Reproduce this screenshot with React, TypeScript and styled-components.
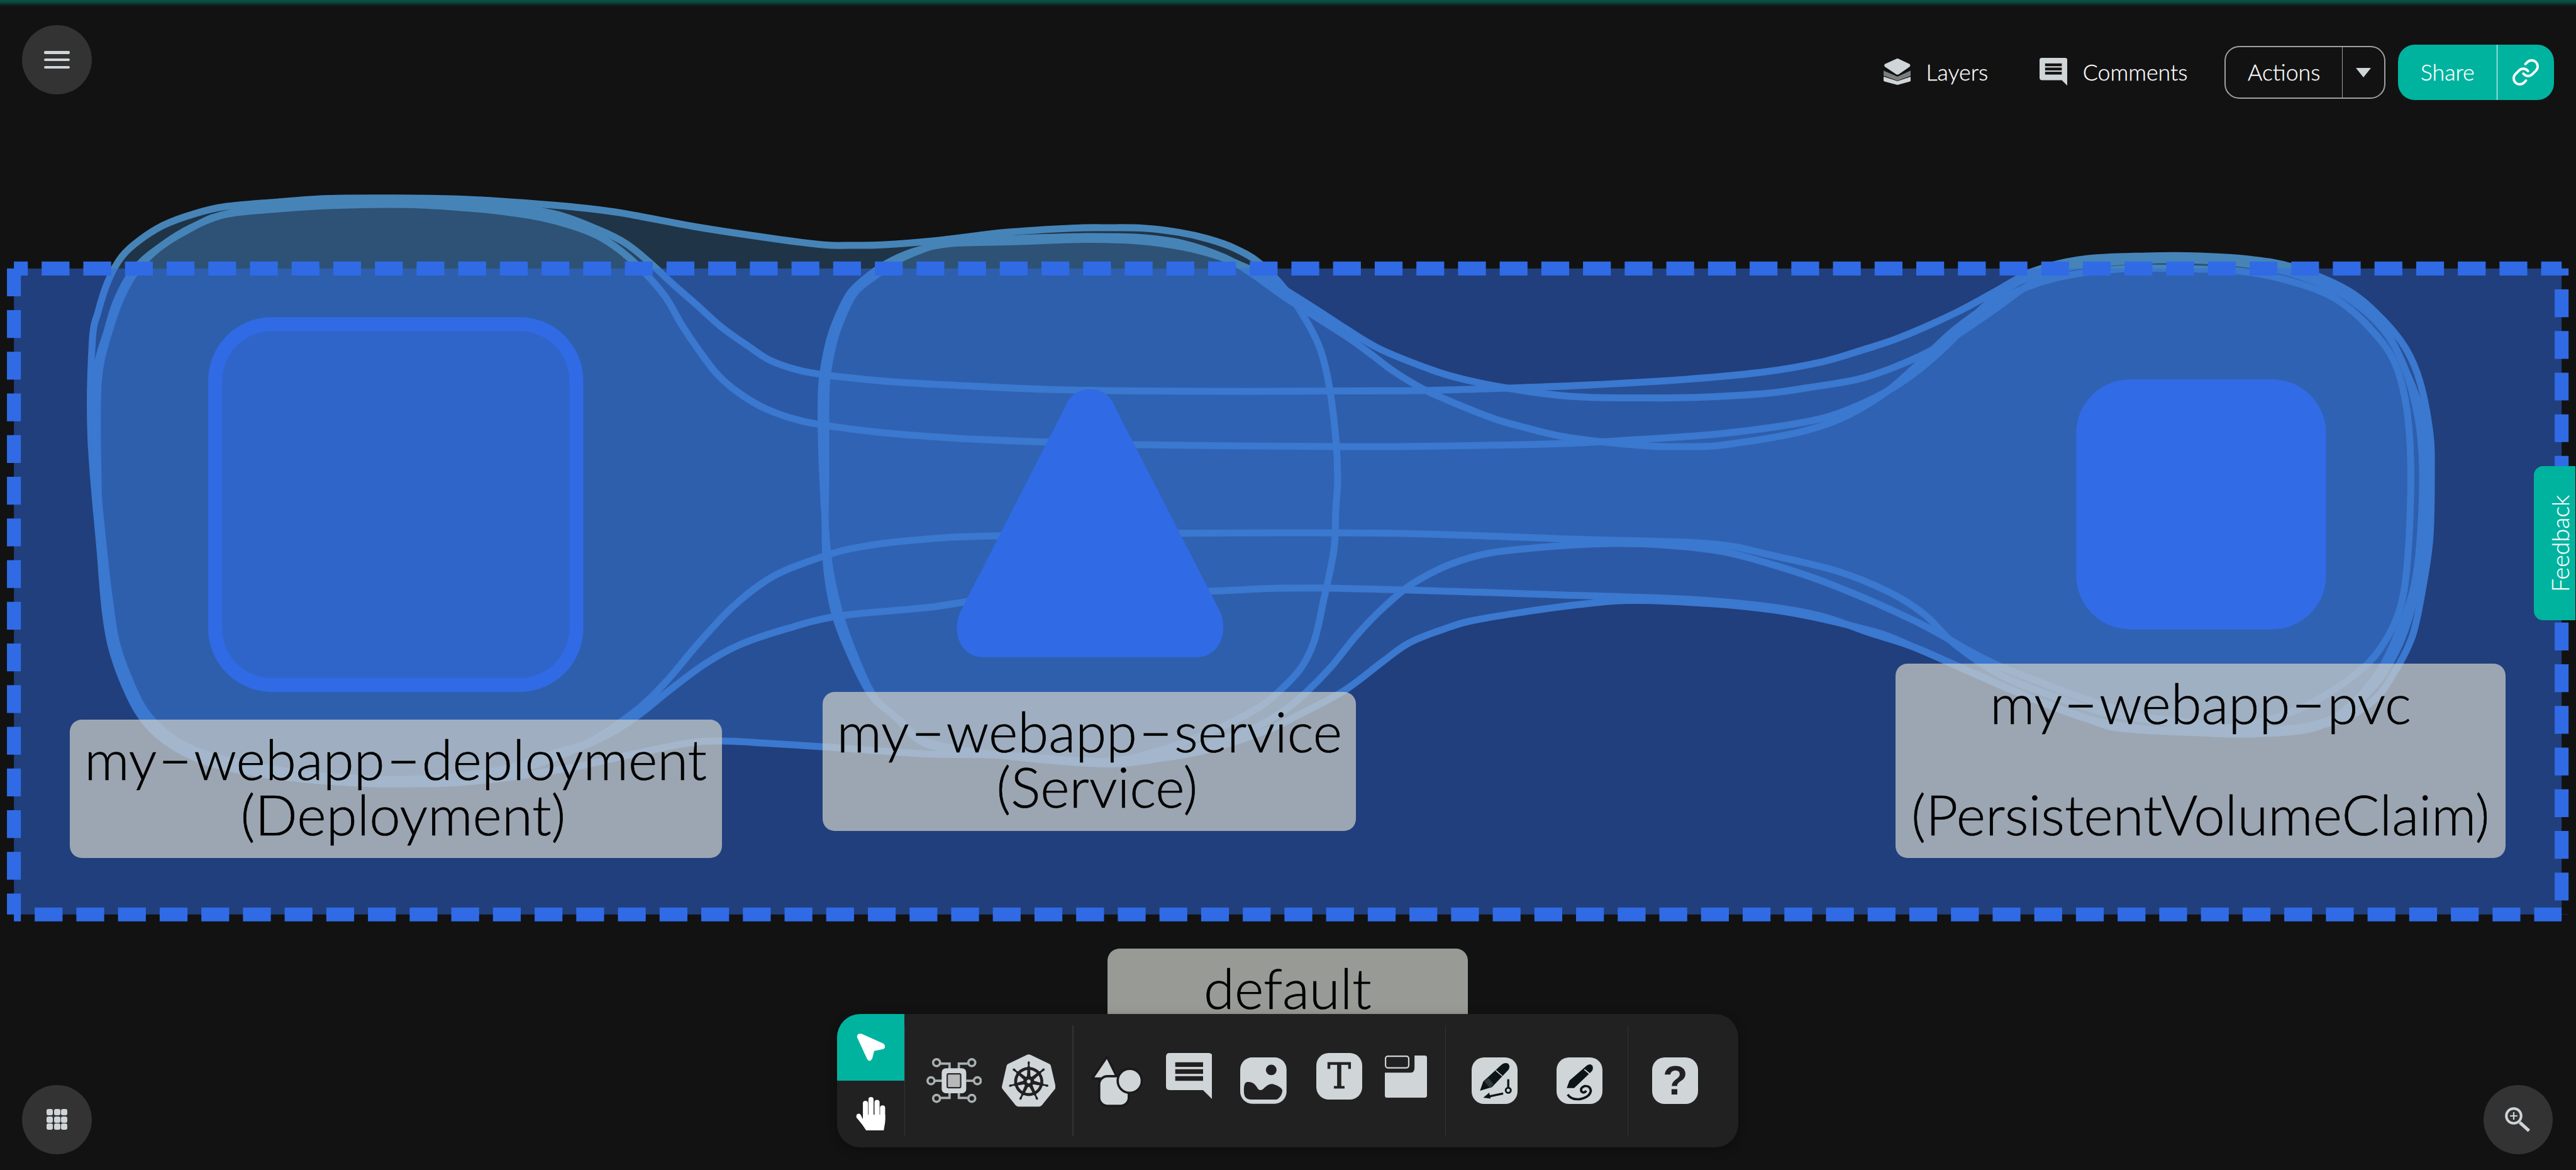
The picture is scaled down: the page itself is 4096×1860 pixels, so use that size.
import styled, { createGlobalStyle } from 'styled-components';
import { Link } from 'lucide-react';
import { SiKubernetes } from 'react-icons/si';

// everything is measured on the 5556 wide reference
const u = (n: number) => `${n * 0.737}px`;

const ICON = '#d0d5d8';
const TEAL = '#00b39f';
const BAR = '#212121';

const GlobalStyle = createGlobalStyle`
  html, body {
    background: #121212;
    margin: 0;
    overflow: hidden;
  }
  * { box-sizing: border-box; }
`;

const Page = styled.div`
  background: #121212;
  color: #fff;
  font-family: Lato, 'Open Sans', sans-serif;
  font-weight: 300;
  height: 1860px;
  overflow: hidden;
  position: relative;
  width: 4096px;
  -webkit-text-stroke: 0.3px #fff;
`;

const TopGlow = styled.div`
  background: linear-gradient(180deg, #0a5347 0%, #0a4a40 30%, #121212 100%);
  height: ${u(13)};
  left: 0;
  position: absolute;
  right: 0;
  top: 0;
`;

const Canvas = styled.svg`
  height: 1860px;
  left: 0;
  position: absolute;
  top: 0;
  width: 4096px;
`;

const NodeLabel = styled.div<{ $x: number; $y: number; $w: number }>`
  background: rgba(204, 207, 201, 0.72);
  border-radius: ${u(26)};
  color: #000;
  font-size: ${u(120.5)};
  left: ${(p) => u(p.$x)};
  line-height: ${u(120)};
  padding: ${u(24)} 0 ${u(35)};
  position: absolute;
  text-align: center;
  top: ${(p) => u(p.$y)};
  white-space: nowrap;
  width: ${(p) => u(p.$w)};
  -webkit-text-stroke: 0.7px #000;
`;

// the hyphens of the node names are much wider and heavier than a plain one
const Dash = styled.span`
  display: inline-block;
  font-size: ${u(48)};
  line-height: 1;
  text-align: center;
  transform: translateY(${u(-24)}) scaleX(3.4);
  width: ${u(80)};
  -webkit-text-stroke: 3px #000;
`;

const RoundButton = styled.button<{ $x: number; $y: number }>`
  align-items: center;
  background: #333;
  border: 0;
  border-radius: 50%;
  display: flex;
  height: ${u(150)};
  justify-content: center;
  left: ${(p) => u(p.$x)};
  padding: 0;
  position: absolute;
  top: ${(p) => u(p.$y)};
  width: ${u(150)};
`;

const Burger = styled.span`
  display: flex;
  flex-direction: column;
  gap: ${u(10)};
  width: ${u(56)};

  i {
    background: ${ICON};
    border-radius: 2px;
    display: block;
    height: ${u(6)};
  }
`;

const DotGrid = styled.span`
  display: grid;
  gap: ${u(2)};
  grid-template-columns: repeat(3, ${u(13.5)});

  i {
    background: ${ICON};
    border-radius: ${u(4)};
    display: block;
    height: ${u(13.5)};
  }
`;

const TopBar = styled.div`
  align-items: center;
  display: flex;
  height: ${u(120)};
  position: absolute;
  right: ${u(48)};
  top: ${u(96)};
`;

const BarLink = styled.div<{ $gap: number }>`
  align-items: center;
  display: flex;
  font-size: ${u(48.5)};
  gap: ${u(33)};
  margin-right: ${(p) => u(p.$gap)};
  padding-bottom: ${u(2)};
`;

const ActionsButton = styled.div`
  align-items: stretch;
  border: ${u(3)} solid #a0a0a0;
  border-radius: ${u(32)};
  display: flex;
  font-size: ${u(48.5)};
  height: ${u(114)};
  margin-right: ${u(27)};
  width: ${u(347)};
`;

const ActionsLabel = styled.span`
  align-items: center;
  border-right: ${u(2)} solid #a0a0a0;
  display: flex;
  justify-content: center;
  padding-bottom: ${u(2)};
  width: ${u(252)};
`;

const Caret = styled.span`
  align-items: center;
  display: flex;
  flex: 1;
  justify-content: center;
  padding-top: ${u(2)};

  &::before {
    border-left: ${u(17)} solid transparent;
    border-right: ${u(17)} solid transparent;
    border-top: ${u(21)} solid ${ICON};
    content: '';
    display: block;
  }
`;

const ShareButton = styled.div`
  background: ${TEAL};
  border-radius: ${u(36)};
  display: flex;
  font-size: ${u(48.5)};
  height: ${u(120)};
  width: ${u(336)};
`;

const ShareLabel = styled.span`
  align-items: center;
  border-right: ${u(2)} solid #fff;
  display: flex;
  justify-content: center;
  padding-bottom: ${u(2)};
  width: ${u(215)};
`;

const ShareLink = styled.span`
  align-items: center;
  display: flex;
  flex: 1;
  justify-content: center;
`;

const FeedbackTab = styled.div`
  align-items: center;
  background: ${TEAL};
  border-radius: ${u(20)} 0 0 ${u(20)};
  display: flex;
  font-size: ${u(51)};
  height: ${u(332)};
  justify-content: center;
  left: ${u(5467)};
  padding-left: ${u(24)};
  position: absolute;
  top: ${u(1006)};
  width: ${u(89)};

  span {
    transform: rotate(180deg);
    writing-mode: vertical-rl;
  }
`;

const Toolbar = styled.div`
  background: ${BAR};
  border-radius: ${u(50)};
  box-shadow: 0 ${u(6)} ${u(20)} rgba(0, 0, 0, 0.25);
  display: flex;
  height: ${u(288)};
  left: ${u(1806)};
  overflow: hidden;
  position: absolute;
  top: ${u(2187)};
  width: ${u(1944)};
`;

const ModeColumn = styled.div`
  display: flex;
  flex: none;
  flex-direction: column;
  width: ${u(145)};
`;

const ModeCell = styled.div<{ $active?: boolean }>`
  align-items: center;
  background: ${(p) => (p.$active ? TEAL : 'transparent')};
  display: flex;
  height: ${u(144)};
  justify-content: center;
`;

const ToolGroup = styled.div<{ $w: number; $pad: number }>`
  align-items: center;
  display: flex;
  flex: none;
  padding-left: ${(p) => u(p.$pad)};
  position: relative;
  width: ${(p) => u(p.$w)};

  &::before {
    background: #333;
    bottom: ${u(24)};
    content: '';
    left: 0;
    position: absolute;
    top: ${u(24)};
    width: ${u(2)};
  }
`;

const Tool = styled.div<{ $gap?: number; $lift?: number }>`
  display: flex;
  flex: none;
  margin-left: ${(p) => u(p.$gap ?? 0)};
  margin-top: ${(p) => u(-2 * (p.$lift ?? 0))};
`;

const Tile = styled.div`
  align-items: center;
  background: ${ICON};
  border-radius: ${u(27)};
  color: #222;
  display: flex;
  flex: none;
  height: ${u(100)};
  justify-content: center;
  overflow: hidden;
  width: ${u(99)};
  -webkit-text-stroke: 0;
`;

const TileSerif = styled.span`
  font-family: 'DejaVu Serif', serif;
  font-size: ${u(76)};
  font-weight: 400;
  line-height: 1;
  -webkit-text-stroke: 1px #222;
`;

const TileMark = styled.span`
  font-family: 'Liberation Sans', sans-serif;
  font-size: ${u(88)};
  font-weight: 700;
  line-height: 1;
`;

// smooth closed outline through the measured points
function outline(pts: number[][]) {
  const n = pts.length;
  let d = `M${pts[0][0]} ${pts[0][1]}`;
  for (let i = 0; i < n; i++) {
    const p0 = pts[(i - 1 + n) % n];
    const p1 = pts[i];
    const p2 = pts[(i + 1) % n];
    const p3 = pts[(i + 2) % n];
    const c1x = p1[0] + (p2[0] - p0[0]) / 6;
    const c1y = p1[1] + (p2[1] - p0[1]) / 6;
    const c2x = p2[0] - (p3[0] - p1[0]) / 6;
    const c2y = p2[1] - (p3[1] - p1[1]) / 6;
    d += ` C${c1x.toFixed(1)} ${c1y.toFixed(1)} ${c2x.toFixed(1)} ${c2y.toFixed(1)} ${p2[0]} ${p2[1]}`;
  }
  return d + 'Z';
}

const bubbles: number[][][] = [
  // deployment + service
  [[196,941],[199,737],[212,671],[234,604],[263,553],[301,518],[354,485],[416,462],[483,446],[593,436],[708,428],[851,427],[985,429],[1081,434],[1234,446],[1339,459],[1500,489],[1672,515],[1777,528],[1835,529],[1902,528],[2026,518],[2170,501],[2313,492],[2390,491],[2466,492],[2543,501],[2605,515],[2662,535],[2715,566],[2772,624],[2820,696],[2849,757],[2868,839],[2882,956],[2885,1038],[2881,1100],[2877,1186],[2856,1289],[2835,1381],[2807,1439],[2765,1485],[2716,1525],[2617,1576],[2505,1617],[2379,1642],[2154,1628],[2000,1626],[1786,1611],[1658,1603],[1556,1598],[1480,1603],[1352,1629],[1212,1659],[1020,1685],[880,1690],[714,1685],[536,1664],[434,1639],[357,1598],[306,1547],[274,1486],[242,1394],[227,1302],[217,1200]],
  // deployment + pvc, upper
  [[206,890],[210,788],[230,717],[249,655],[277,599],[311,559],[359,523],[407,495],[459,469],[530,452],[600,440],[708,432],[851,430],[985,434],[1091,445],[1200,462],[1290,495],[1350,525],[1400,565],[1454,615],[1500,655],[1557,706],[1615,747],[1663,778],[1730,800],[1816,813],[1921,823],[2064,831],[2265,840],[2457,843],[2696,844],[2900,843],[3075,842],[3251,837],[3433,830],[3637,818],[3805,802],[3931,780],[4016,755],[4100,727],[4217,675],[4301,630],[4385,585],[4491,559],[4629,552],[4745,552],[4850,559],[4945,576],[5062,625],[5135,685],[5188,750],[5220,825],[5241,934],[5244,1011],[5241,1159],[5225,1271],[5204,1369],[5170,1440],[5120,1510],[5040,1555],[4930,1572],[4820,1570],[4740,1565],[4555,1540],[4425,1500],[4314,1455],[4217,1390],[4153,1327],[4077,1278],[3964,1232],[3824,1198],[3684,1172],[3403,1163],[3000,1150],[2543,1150],[2122,1156],[1969,1165],[1864,1178],[1787,1196],[1671,1241],[1582,1307],[1505,1389],[1441,1465],[1378,1527],[1276,1598],[1199,1623],[1080,1660],[900,1680],[714,1675],[540,1650],[440,1625],[370,1590],[318,1540],[285,1480],[252,1390],[237,1300],[225,1200],[206,1000]],
  // deployment + pvc, lower
  [[210,900],[216,790],[240,700],[262,640],[290,590],[325,550],[370,515],[420,487],[488,462],[593,451],[698,444],[804,441],[909,442],[1014,449],[1091,457],[1167,469],[1234,487],[1292,510],[1339,541],[1387,584],[1435,640],[1470,700],[1505,752],[1548,808],[1596,849],[1653,882],[1730,908],[1835,925],[1959,938],[2122,948],[2457,959],[2900,963],[3096,962],[3356,957],[3531,948],[3693,937],[3833,920],[3931,902],[4006,875],[4080,838],[4143,794],[4206,738],[4280,660],[4354,608],[4440,580],[4560,565],[4700,560],[4850,570],[4960,595],[5060,640],[5140,710],[5185,790],[5215,900],[5225,1011],[5220,1160],[5205,1271],[5170,1370],[5130,1450],[5070,1520],[4990,1570],[4850,1583],[4740,1580],[4629,1575],[4555,1568],[4490,1545],[4375,1503],[4259,1453],[4132,1397],[4034,1365],[3900,1322],[3684,1295],[3403,1284],[2842,1268],[2603,1275],[2200,1285],[2000,1310],[1811,1328],[1696,1356],[1594,1391],[1520,1432],[1441,1491],[1380,1540],[1314,1583],[1224,1623],[1122,1659],[1000,1675],[880,1690],[714,1685],[536,1664],[434,1639],[357,1598],[306,1547],[270,1480],[240,1394],[225,1300],[215,1150]],
  // service + pvc, upper
  [[1771,910],[1773,823],[1787,742],[1806,686],[1835,630],[1878,591],[1921,563],[1978,540],[2055,525],[2198,521],[2342,516],[2457,520],[2552,533],[2629,553],[2686,576],[2715,590],[2780,630],[2840,668],[2900,707],[2977,753],[3089,798],[3153,817],[3251,837],[3356,852],[3433,857],[3531,858],[3658,857],[3812,848],[3900,836],[4006,818],[4080,794],[4153,762],[4217,725],[4301,668],[4375,615],[4450,580],[4560,558],[4700,556],[4850,562],[4950,585],[5050,630],[5135,700],[5185,790],[5225,900],[5232,1011],[5228,1160],[5210,1280],[5175,1390],[5120,1480],[5040,1545],[4950,1570],[4830,1575],[4740,1560],[4629,1547],[4555,1527],[4462,1495],[4398,1470],[4314,1437],[4250,1405],[4132,1340],[3964,1266],[3824,1218],[3687,1185],[3487,1172],[3263,1186],[3150,1209],[3052,1255],[2982,1312],[2926,1370],[2870,1439],[2814,1496],[2765,1536],[2702,1571],[2600,1605],[2505,1628],[2379,1642],[2154,1628],[2000,1605],[1939,1552],[1888,1506],[1850,1430],[1811,1322],[1786,1200],[1775,1038]],
  // service + pvc, lower
  [[1781,1030],[1781,910],[1783,823],[1797,742],[1816,686],[1845,630],[1888,595],[1930,565],[1985,540],[2055,520],[2198,514],[2342,510],[2457,512],[2552,525],[2640,555],[2700,590],[2770,640],[2900,723],[2956,763],[3005,800],[3068,838],[3139,870],[3223,903],[3293,923],[3363,940],[3447,952],[3559,962],[3623,963],[3693,962],[3763,953],[3826,943],[3889,930],[3953,910],[4006,885],[4069,845],[4132,790],[4217,710],[4312,646],[4428,601],[4576,580],[4734,580],[4850,587],[4956,611],[5040,646],[5114,710],[5167,787],[5194,906],[5199,1082],[5183,1285],[5135,1397],[5062,1468],[4956,1530],[4840,1565],[4740,1572],[4630,1572],[4502,1550],[4375,1503],[4259,1453],[4132,1397],[4034,1360],[3824,1315],[3557,1295],[3403,1304],[3193,1335],[3110,1358],[3038,1387],[2982,1427],[2898,1490],[2800,1542],[2730,1576],[2603,1617],[2505,1635],[2379,1647],[2154,1628],[2000,1600],[1930,1545],[1880,1500],[1840,1425],[1800,1322],[1781,1200]],
];

const RING = 'M2296 880C2306 850 2330 839 2351 839C2372 839 2396 850 2406 880L2633 1322C2650 1370 2625 1417 2582 1417L2119 1417C2076 1417 2052 1370 2070 1322Z';

function Diagram() {
  const paths = bubbles.map(outline);
  const dash = { stroke: '#306be5', strokeWidth: 30, strokeDasharray: '60 29.85', fill: 'none' };
  return (
    <Canvas viewBox="0 0 5556 2523">
      {paths.map((d, i) => (
        <path key={i} d={d} fill="rgba(51,96,138,0.45)" />
      ))}
      {paths.map((d, i) => (
        <path key={i} d={d} fill="none" stroke="#4684b8" strokeWidth={15} strokeLinejoin="round" />
      ))}
      <rect x={30} y={579} width={5495} height={1393} fill="rgba(48,107,229,0.5)" />
      <line x1={30} y1={579} x2={5525} y2={579} strokeDashoffset={30} {...dash} />
      <line x1={30} y1={579} x2={30} y2={1972} {...dash} />
      <line x1={30} y1={1972} x2={5525} y2={1972} strokeDashoffset={45} {...dash} />
      <line x1={5525} y1={579} x2={5525} y2={1972} strokeDashoffset={45} {...dash} />
      <rect x={464} y={699} width={779} height={778} rx={122} fill="rgba(48,107,229,0.5)" stroke="#306be5" strokeWidth={30} />
      <path d={RING} fill="#306be5" />
      <rect x={4478} y={818} width={539} height={539} rx={116} fill="#316be5" />
    </Canvas>
  );
}

function LayersIcon() {
  return (
    <svg width={u(59)} height={u(57)} viewBox="0 0 59 57">
      <path d="M30 39 L59 26 V37 L30 48 L0 37 V26Z" fill="#7a7d7e" />
      <path d="M0 39 L30 49 L59 39 V47 Q59 49 56 50 L30 57 L3 50 Q0 49 0 47Z" fill={ICON} />
      <path d="M27 1 Q30 -1 33 1 L56 12 Q59 15 56 18 L33 34 Q30 36 27 34 L3 18 Q0 15 3 12Z" fill={ICON} />
    </svg>
  );
}

function CommentIcon({ size, cut }: { size: number; cut: string }) {
  return (
    <svg width={u(size)} height={u(size)} viewBox="0 0 100 100">
      <path d="M8 0H92Q100 0 100 8V100L80 80H8Q0 80 0 72V8Q0 0 8 0Z" fill={ICON} />
      <rect x={20} y={20} width={60} height={10} fill={cut} />
      <rect x={20} y={35} width={60} height={10} fill={cut} />
      <rect x={20} y={50} width={60} height={10} fill={cut} />
    </svg>
  );
}

function CursorIcon() {
  return (
    <svg width={u(62)} height={u(62)} viewBox="0 0 62 62">
      <path d="M11 2L58 23Q65 30 58 35L38 39L34 55Q29 65 23 57L1 9Q1 0 11 2Z" fill="#fff" />
    </svg>
  );
}

function HandIcon() {
  return (
    <svg width={u(64)} height={u(72)} viewBox="0 0 64 72" fill="#fff">
      <rect x={15} y={8} width={11} height={46} rx={5.5} />
      <rect x={27} y={0} width={11} height={50} rx={5.5} />
      <rect x={40} y={6} width={11} height={46} rx={5.5} />
      <rect x={52} y={18} width={11} height={36} rx={5.5} />
      <path d="M15 38H63V54L60 72H22L14 60L1 44Q0 36 6 36Q10 36 12 42L15 48Z" />
    </svg>
  );
}

function ChipIcon() {
  const wire = '#a8b0b0';
  const nodes = [[22, 10], [98, 10], [10, 49], [110, 49], [22, 87], [98, 87]];
  return (
    <svg width={u(120)} height={u(97)} viewBox="0 0 120 97">
      <path d="M31 12H50V24M89 12H70V24M19 49H34M101 49H86M31 86H50V74M89 86H70V74" fill="none" stroke={wire} strokeWidth={5} />
      {nodes.map(([cx, cy]) => (
        <circle key={`${cx}-${cy}`} cx={cx} cy={cy} r={7.5} fill="none" stroke={wire} strokeWidth={5} />
      ))}
      <rect x={33} y={22} width={53} height={54} rx={9} fill={ICON} />
      <rect x={45} y={34} width={29} height={30} rx={3} fill="#b5bab9" stroke="#2a2a2a" strokeWidth={3} />
    </svg>
  );
}

function ShapesIcon() {
  return (
    <svg width={u(115)} height={u(118)} viewBox="0 0 115 118">
      <path d="M37 8L60 55H5Z" fill={ICON} stroke="#1a1a1a" strokeWidth={5} strokeLinejoin="round" />
      <rect x={20} y={50} width={64} height={64} rx={18} fill={ICON} stroke="#1a1a1a" strokeWidth={5} />
      <circle cx={86} cy={60} r={26} fill={ICON} stroke="#1a1a1a" strokeWidth={5} />
    </svg>
  );
}

function ImageIcon() {
  return (
    <svg width={u(100)} height={u(100)} viewBox="0 0 100 100">
      <rect width={100} height={100} rx={26} fill={ICON} />
      <circle cx={67} cy={27} r={11.5} fill={BAR} />
      <path d="M8 73C8 62 9 53 16 53C26 52 32 58 36 64C40 72 45 72 50 68C58 60 64 56 72 58C80 60 91 66 91 72C90 80 86 88 78 91H24C12 91 8 84 8 73Z" fill={BAR} />
    </svg>
  );
}

function ContainerIcon() {
  return (
    <svg width={u(91)} height={u(91)} viewBox="0 0 91 91">
      <path d="M64 0H86Q91 0 91 5V86Q91 91 86 91H5Q0 91 0 86V37H54Q64 37 64 27Z" fill={ICON} />
      <rect x={1.5} y={1.5} width={50} height={25} rx={5} fill="none" stroke={ICON} strokeWidth={3} />
    </svg>
  );
}

function PenArrowIcon() {
  return (
    <svg width={u(99)} height={u(100)} viewBox="0 0 99 100">
      <path d="M18 72L25 52L62 18Q70 10 78 13Q84 18 80 26L44 64Z" fill="#0d1417" />
      <path d="M27 52L36 44L47 58L40 66Z" fill="#2d383c" />
      <path d="M52 28L66 40" stroke={ICON} strokeWidth={2} />
      <path d="M79 47V64M68 78L34 85" stroke="#0d1417" strokeWidth={4.5} />
      <circle cx={79} cy={71} r={5.5} fill="none" stroke="#0d1417" strokeWidth={4} />
      <path d="M25 87L38 76L41 89Z" fill="#0d1417" />
    </svg>
  );
}

function PenSwirlIcon() {
  return (
    <svg width={u(98)} height={u(100)} viewBox="0 0 98 100">
      <path d="M22 66L28 50L66 17Q74 12 78 19Q80 26 75 31L38 66Z" fill="#0d1417" />
      <path d="M60 26L72 36" stroke={ICON} strokeWidth={2.5} />
      <path d="M24 80Q32 92 50 90Q72 86 74 72Q72 60 60 62Q50 66 54 74Q60 78 64 72" fill="none" stroke="#0d1417" strokeWidth={5} />
    </svg>
  );
}

function ZoomIcon() {
  return (
    <svg width={u(56)} height={u(54)} viewBox="0 0 56 54" fill="none" stroke={ICON}>
      <circle cx={19} cy={19} r={16} strokeWidth={5.5} />
      <path d="M19 11V27M11 19H27" strokeWidth={3} />
      <path d="M32 33L52 51" strokeWidth={7} />
    </svg>
  );
}

export default function App() {
  return (
    <Page>
      <GlobalStyle />
      <Diagram />
      <TopGlow />

      <NodeLabel $x={150} $y={1552} $w={1407}>
        my<Dash>-</Dash>webapp<Dash>-</Dash>deployment<br />&nbsp;(Deployment)
      </NodeLabel>
      <NodeLabel $x={1775} $y={1493} $w={1151}>
        my<Dash>-</Dash>webapp<Dash>-</Dash>service<br />&nbsp;(Service)
      </NodeLabel>
      <NodeLabel $x={4089} $y={1432} $w={1317}>
        my<Dash>-</Dash>webapp<Dash>-</Dash>pvc<br /><br />(PersistentVolumeClaim)
      </NodeLabel>
      <NodeLabel $x={2389} $y={2046} $w={778}>default</NodeLabel>

      <RoundButton $x={48} $y={54}>
        <Burger><i /><i /><i /></Burger>
      </RoundButton>
      <RoundButton $x={48} $y={2340}>
        <DotGrid>
          {Array.from({ length: 9 }, (_, i) => <i key={i} />)}
        </DotGrid>
      </RoundButton>
      <RoundButton $x={5358} $y={2340}>
        <ZoomIcon />
      </RoundButton>

      <TopBar>
        <BarLink $gap={111}><LayersIcon />Layers</BarLink>
        <BarLink $gap={80}><CommentIcon size={60} cut="#121212" />Comments</BarLink>
        <ActionsButton>
          <ActionsLabel>Actions</ActionsLabel>
          <Caret />
        </ActionsButton>
        <ShareButton>
          <ShareLabel>Share</ShareLabel>
          <ShareLink><Link size={46} strokeWidth={2} color="#fff" /></ShareLink>
        </ShareButton>
      </TopBar>

      <FeedbackTab><span>Feedback</span></FeedbackTab>

      <Toolbar>
        <ModeColumn>
          <ModeCell $active><CursorIcon /></ModeCell>
          <ModeCell><HandIcon /></ModeCell>
        </ModeColumn>
        <ToolGroup $w={363} $pad={47}>
          <Tool><ChipIcon /></Tool>
          <Tool $gap={43}><SiKubernetes size={u(116)} color={ICON} /></Tool>
        </ToolGroup>
        <ToolGroup $w={804} $pad={37}>
          <Tool><ShapesIcon /></Tool>
          <Tool $gap={49} $lift={9}><CommentIcon size={100} cut={BAR} /></Tool>
          <Tool $gap={61}><ImageIcon /></Tool>
          <Tool $gap={64} $lift={9}><Tile><TileSerif>T</TileSerif></Tile></Tool>
          <Tool $gap={49} $lift={9}><ContainerIcon /></Tool>
        </ToolGroup>
        <ToolGroup $w={393} $pad={57}>
          <Tool><Tile><PenArrowIcon /></Tile></Tool>
          <Tool $gap={84}><Tile><PenSwirlIcon /></Tile></Tool>
        </ToolGroup>
        <ToolGroup $w={239} $pad={54}>
          <Tile><TileMark>?</TileMark></Tile>
        </ToolGroup>
      </Toolbar>
    </Page>
  );
}
